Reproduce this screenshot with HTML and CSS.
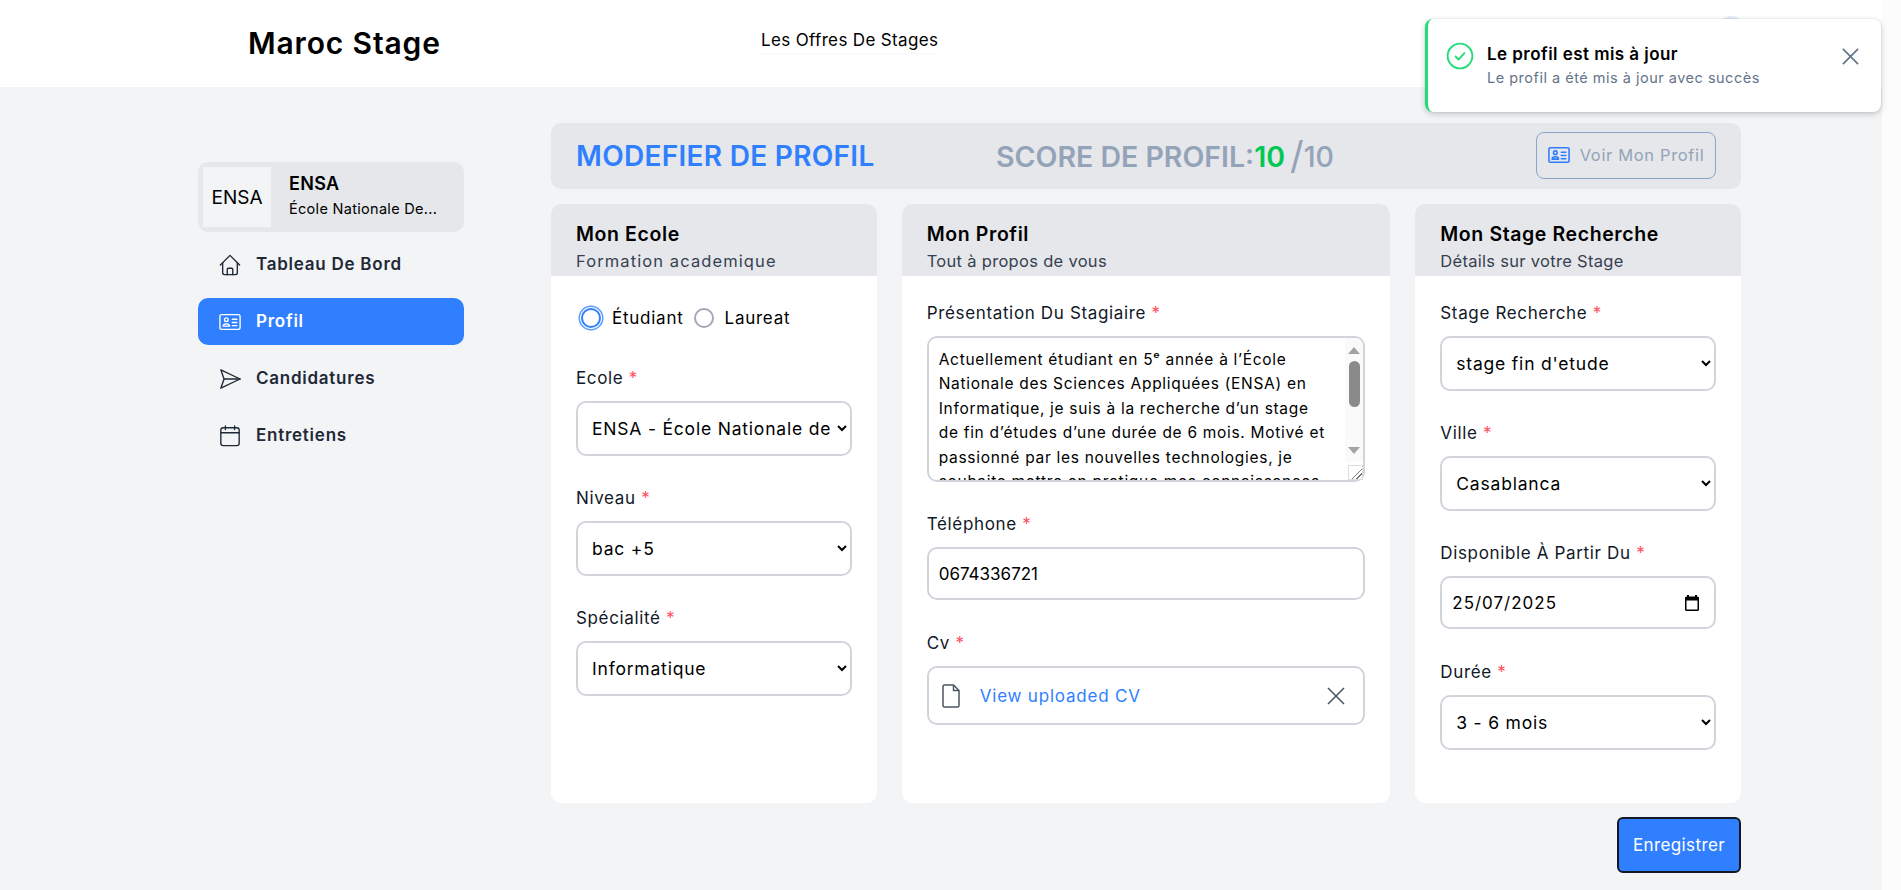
FILE: index.html
```html
<!DOCTYPE html>
<html lang="fr">
<head>
    <meta charset="UTF-8">
    <meta name="viewport" content="width=device-width, initial-scale=1.0">
    <title>Maroc Stage</title>
    <link rel="stylesheet" href="styles.css">
</head>
<body>
    <header class="topbar">
        <div class="brand">Maroc Stage</div>
        <a class="topbar-link" href="#">Les Offres De Stages</a>
        <div class="avatar"></div>
    </header>

    <div class="toast">
        <svg class="toast-check" viewBox="0 0 24 24" fill="none" stroke="#22dd77" stroke-width="1.6" stroke-linecap="round" stroke-linejoin="round"><circle cx="12" cy="12" r="10.6"/><path d="M8.2 12.4l2.6 2.6 5-5.4"/></svg>
        <div class="toast-body">
            <div class="toast-title">Le profil est mis à jour</div>
            <div class="toast-text">Le profil a été mis à jour avec succès</div>
        </div>
        <svg class="toast-close" viewBox="0 0 18 18" fill="none" stroke="#64748b" stroke-width="1.8"><path d="M1 1l16 16M17 1L1 17"/></svg>
    </div>

    <div class="page">
        <aside class="sidebar">
            <div class="school-card">
                <div class="school-logo">ENSA</div>
                <div class="school-info">
                    <div class="school-name">ENSA</div>
                    <div class="school-full">École Nationale De...</div>
                </div>
            </div>
            <a class="nav-item" href="#">
                <svg class="nav-icon" viewBox="0 0 24 24" fill="none" stroke="currentColor" stroke-width="1.5" stroke-linecap="round" stroke-linejoin="round"><path d="M1.5 12L12 1.5 22.500 12"/><path d="M4 9.500V20.500a2 2 0 0 0 2 2h12a2 2 0 0 0 2-2V9.500"/><path d="M9 22.500v-6a1 1 0 0 1 1-1h4a1 1 0 0 1 1 1v6"/></svg>
                Tableau De Bord
            </a>
            <a class="nav-item active" href="#">
                <svg class="nav-icon" viewBox="0 0 24 24" fill="none" stroke="currentColor" stroke-width="1.500" stroke-linecap="round" stroke-linejoin="round"><rect x="1" y="4" width="22" height="16" rx="2"/><circle cx="8" cy="9.500" r="2"/><path d="M4.500 16.500c0-1.500 1.500-2.500 3.500-2.500s3.500 1 3.500 2.500z"/><path d="M14.500 9h5M14.500 12.500h5M14.500 16h5"/></svg>
                Profil
            </a>
            <a class="nav-item" href="#">
                <svg class="nav-icon" viewBox="0 0 24 24" fill="none" stroke="currentColor" stroke-width="1.500" stroke-linecap="round" stroke-linejoin="round"><path d="M2 2l21 10L2 22l3.500-10z"/><path d="M5.500 12H23"/></svg>
                Candidatures
            </a>
            <a class="nav-item" href="#">
                <svg class="nav-icon" viewBox="0 0 24 24" fill="none" stroke="currentColor" stroke-width="1.500" stroke-linecap="round" stroke-linejoin="round"><path d="M7 1v4M17 1v4"/><rect x="2" y="3" width="20" height="19.500" rx="2.500"/><path d="M2 8.500h20"/></svg>
                Entretiens
            </a>
        </aside>

        <main class="content">
            <div class="title-bar">
                <h1 class="title">MODEFIER DE PROFIL</h1>
                <div class="score">SCORE DE PROFIL:<span class="score-value">10</span><span class="score-slash">/</span><span class="score-total">10</span></div>
                <button class="view-btn" type="button">
                    <svg class="view-icon" viewBox="0 0 24 24" fill="none" stroke="#2f7dff" stroke-width="1.700" stroke-linecap="round" stroke-linejoin="round"><rect x="1" y="4" width="22" height="16" rx="1.500"/><circle cx="8" cy="9.500" r="2"/><path d="M4.500 16.500c0-1.500 1.500-2.500 3.500-2.500s3.500 1 3.500 2.500z"/><path d="M14.500 9h5M14.500 12.500h5M14.500 16h5"/></svg>
                    Voir Mon Profil
                </button>
            </div>

            <div class="cards">
                <section class="card">
                    <div class="card-head">
                        <h2>Mon Ecole</h2>
                        <p class="sub-wide">Formation academique</p>
                    </div>
                    <div class="card-body">
                        <div class="radios">
                            <label class="radio"><input type="radio" name="statut" class="radio-input on" checked> Étudiant</label>
                            <label class="radio"><input type="radio" name="statut" class="radio-input"> Laureat</label>
                        </div>
                        <div class="field field-ecole">
                            <label>Ecole <span class="req">*</span></label>
                            <select class="control"><option>ENSA - École Nationale des Sciences Appliquées</option></select>
                        </div>
                        <div class="field">
                            <label>Niveau <span class="req">*</span></label>
                            <select class="control"><option>bac +5</option></select>
                        </div>
                        <div class="field">
                            <label>Spécialité <span class="req">*</span></label>
                            <select class="control"><option>Informatique</option></select>
                        </div>
                    </div>
                </section>

                <section class="card">
                    <div class="card-head">
                        <h2>Mon Profil</h2>
                        <p>Tout à propos de vous</p>
                    </div>
                    <div class="card-body card-body-top">
                        <div class="field">
                            <label>Présentation Du Stagiaire <span class="req">*</span></label>
                            <div class="area-wrap">
                                <textarea class="control area" wrap="off">Actuellement étudiant en 5ᵉ année à l’École
Nationale des Sciences Appliquées (ENSA) en
Informatique, je suis à la recherche d’un stage
de fin d’études d’une durée de 6 mois. Motivé et
passionné par les nouvelles technologies, je
souhaite mettre en pratique mes connaissances
en développement web et en gestion de projets
au sein d’une équipe dynamique, rigoureux,
curieux et autonome.</textarea>
                                <div class="area-bar">
                                    <span class="bar-up"></span>
                                    <span class="bar-thumb"></span>
                                    <span class="bar-down"></span>
                                </div>
                            </div>
                        </div>
                        <div class="field field-tel">
                            <label>Téléphone <span class="req">*</span></label>
                            <input class="control input" type="text" value="0674336721">
                        </div>
                        <div class="field">
                            <label>Cv <span class="req">*</span></label>
                            <div class="control cv-box">
                                <svg class="cv-doc" viewBox="0 0 18 24" fill="none" stroke="#4b5563" stroke-width="1.500" stroke-linejoin="round"><path d="M2.500 1h9l5.500 5.500V21.500a1.500 1.500 0 0 1-1.500 1.500h-13A1.500 1.500 0 0 1 1 21.500V2.500A1.500 1.500 0 0 1 2.500 1z"/><path d="M11.500 1v5.500H17"/></svg>
                                <a class="cv-link" href="#">View uploaded CV</a>
                                <svg class="cv-close" viewBox="0 0 18 18" fill="none" stroke="#4b5563" stroke-width="1.600"><path d="M1 1l16 16M17 1L1 17"/></svg>
                            </div>
                        </div>
                    </div>
                </section>

                <section class="card">
                    <div class="card-head">
                        <h2>Mon Stage Recherche</h2>
                        <p>Détails sur votre Stage</p>
                    </div>
                    <div class="card-body card-body-top">
                        <div class="field">
                            <label>Stage Recherche <span class="req">*</span></label>
                            <select class="control"><option>stage fin d'etude</option></select>
                        </div>
                        <div class="field">
                            <label>Ville <span class="req">*</span></label>
                            <select class="control"><option>Casablanca</option></select>
                        </div>
                        <div class="field field-date">
                            <label>Disponible À Partir Du <span class="req">*</span></label>
                            <div class="control date-box">
                                <input class="date-input" type="text" value="25/07/2025">
                                <svg class="date-icon" viewBox="0 0 14 16"><path fill="#000" d="M2 0h2v1.500h6V0h2v1.500h.500A1.500 1.500 0 0 1 14 3v11.500a1.500 1.500 0 0 1-1.500 1.500h-11A1.500 1.500 0 0 1 0 14.500V3a1.500 1.500 0 0 1 1.500-1.500H2zM1.500 5.500v9h11v-9z"/></svg>
                            </div>
                        </div>
                        <div class="field">
                            <label>Durée <span class="req">*</span></label>
                            <select class="control"><option>3 - 6 mois</option></select>
                        </div>
                    </div>
                </section>
            </div>

            <div class="actions">
                <button class="save-btn" type="button">Enregistrer</button>
            </div>
        </main>
    </div>
</body>
</html>
```

FILE: styles.css
```css
* {
    box-sizing: border-box;
}
html {
    height: 100%;
    background-color: #fcfcfc;
    overflow: hidden;
}
body {
    margin: 0;
    width: 1882px;
    height: 100%;
    background-color: #f3f4f6;
    font-family: Inter, "Noto Sans", sans-serif;
    color: #000;
}
a {
    text-decoration: none;
    color: inherit;
}

.topbar {
    height: 87px;
    background-color: #fff;
    display: flex;
    align-items: center;
    padding-left: 248px;
    position: relative;
}
.brand {
    font-size: 30px;
    font-weight: 600;
    letter-spacing: 0.85px;
    width: 513px;
    margin-top: -2px;
}
.topbar-link {
    font-size: 17px;
    letter-spacing: 0.35px;
    margin-top: -3px;
    padding-bottom: 3px;
    border-bottom: 1px solid #f7f7f8;
}
.avatar {
    position: absolute;
    left: 1717px;
    top: 16px;
    width: 28px;
    height: 28px;
    border-radius: 50%;
    background-color: #e5edf9;
}

.toast {
    position: absolute;
    left: 1425px;
    top: 19px;
    width: 456px;
    height: 93px;
    background-color: #fff;
    border-left: 3px solid #22dd77;
    border-radius: 8px;
    box-shadow: 0 2px 6px rgba(0, 0, 0, 0.2), 0 0 0 1px rgba(0, 0, 0, 0.03);
    display: flex;
    padding: 23px 22px 0 18px;
    z-index: 5;
}
.toast-check {
    width: 28px;
    height: 28px;
    margin-right: 13px;
    flex: none;
}
.toast-body {
    flex: 1;
}
.toast-title {
    font-size: 17px;
    font-weight: 600;
    letter-spacing: 0.45px;
    line-height: 24px;
}
.toast-text {
    font-size: 14.5px;
    letter-spacing: 0.5px;
    line-height: 24px;
    color: #64748b;
}
.toast-close {
    width: 17px;
    height: 17px;
    margin-top: 6px;
}

.page {
    display: flex;
    padding: 36px 0 0 198px;
}
.sidebar {
    width: 266px;
    margin-top: 39px;
    display: flex;
    flex-direction: column;
    gap: 10px;
}
.school-card {
    height: 70px;
    background-color: #e5e7eb;
    border-radius: 10px;
    display: flex;
    align-items: center;
    padding-left: 5px;
    margin-bottom: -1px;
}
.school-logo {
    width: 68px;
    height: 60px;
    background-color: #f3f4f6;
    display: flex;
    align-items: center;
    justify-content: center;
    font-size: 19px;
}
.school-info {
    margin: -3px 0 0 18px;
}
.school-name {
    font-size: 18px;
    font-weight: 600;
    letter-spacing: 0.3px;
    line-height: 25px;
}
.school-full {
    font-size: 14.5px;
    letter-spacing: 0.3px;
    line-height: 25px;
}
.nav-item {
    height: 47px;
    display: flex;
    align-items: center;
    padding: 0 0 2px 21px;
    border-radius: 10px;
    font-size: 17px;
    font-weight: 600;
    letter-spacing: 0.75px;
    color: #1f2937;
}
.nav-item.active {
    background-color: #2f7fff;
    color: #fff;
}
.nav-icon {
    width: 22px;
    height: 22px;
    margin: 2px 15px 0 0;
    flex: none;
}

.content {
    width: 1190px;
    margin-left: 87px;
}
.title-bar {
    height: 66px;
    background-color: #e5e7eb;
    border-radius: 10px;
    display: flex;
    align-items: center;
    padding: 0 25px;
    position: relative;
}
.title {
    margin: 0;
    font-size: 28px;
    font-weight: 600;
    letter-spacing: 0.3px;
    color: #2f7fff;
    width: 420px;
}
.score {
    font-size: 28.500px;
    font-weight: 600;
    color: #94a3b8;
    display: flex;
    align-items: center;
    white-space: pre;
}
.score-value {
    color: #00c853;
}
.score-slash {
    font-size: 38px;
    font-weight: 400;
    line-height: 1;
    margin: -2px 0 0 5px;
}
.score-total {
    font-weight: 500;
}
.view-btn {
    margin: -2px 0 0 auto;
    width: 180px;
    height: 47px;
    background: transparent;
    border: 1px solid #8ea3c8;
    border-radius: 8px;
    display: flex;
    align-items: center;
    justify-content: center;
    gap: 10px;
    font-family: inherit;
    font-size: 16.500px;
    letter-spacing: 0.65px;
    color: #94a3b8;
}
.view-icon {
    width: 22px;
    height: 22px;
    flex: none;
}

.cards {
    display: grid;
    grid-template-columns: 2fr 3fr 2fr;
    gap: 25px;
    margin-top: 15px;
}
.card {
    height: 599px;
    background-color: #fff;
    border-radius: 10px;
    overflow: hidden;
}
.card-head {
    height: 72px;
    background-color: #e5e7eb;
    padding: 18px 25px 0;
}
.card-head h2 {
    margin: 0;
    font-size: 19.500px;
    font-weight: 600;
    letter-spacing: 0.6px;
    line-height: 24px;
}
.card-head p {
    margin: 3px 0 0;
    font-size: 16.500px;
    letter-spacing: 0.3px;
    line-height: 24px;
    color: #374151;
}
.card-head .sub-wide {
    letter-spacing: 1.1px;
}
.card-body {
    padding: 0 25px;
}
.card-body-top {
    padding-top: 25px;
}
.radios {
    display: flex;
    align-items: center;
    gap: 10px;
    height: 84px;
    padding-left: 5px;
}
.radio {
    display: flex;
    align-items: center;
    font-size: 17px;
    letter-spacing: 0.75px;
}
.radio-input {
    appearance: none;
    width: 20px;
    height: 20px;
    margin: 0 11px 0 0;
    border: 2px solid #a3a8b4;
    border-radius: 50%;
    background-color: #fff;
}
.radio-input.on {
    border: 2.500px solid #2f7fff;
    box-shadow: 0 0 0 1px #fff, 0 0 0 2.500px #5a9bff;
}
.field {
    margin-bottom: 30px;
}
.field-ecole {
    margin-top: 6px;
}
.field label {
    display: block;
    font-size: 17px;
    letter-spacing: 0.65px;
    line-height: 24px;
    margin-bottom: 11px;
    color: #111827;
}
.req {
    color: #ff4d5e;
}
.control {
    width: 100%;
    height: 55px;
    background-color: #fff;
    border: 2px solid #d1d5db;
    border-radius: 10px;
    font-family: inherit;
    font-size: 17px;
    color: #000;
}
select.control {
    padding: 0 4px 0 10px;
    font-size: 17.500px;
    letter-spacing: 0.8px;
}
.input {
    height: 53px;
    padding: 0 10px;
}
.field-tel {
    margin-bottom: 31px;
}
.area-wrap {
    position: relative;
}
.area {
    display: block;
    height: 146px;
    padding: 10px 10px;
    font-size: 15.500px;
    letter-spacing: 0.7px;
    line-height: 24.400px;
    overflow: hidden;
    resize: both;
}
.area::-webkit-resizer {
    background-color: #fff;
    border: 1px solid #dcdcdc;
    background-image: linear-gradient(135deg, transparent 58%, #777 58%, #777 64%, transparent 64%, transparent 76%, #777 76%, #777 82%, transparent 82%);
}
/* headless chrome hides real scrollbars, so this one is drawn over the textarea */
.area-bar {
    position: absolute;
    top: 2px;
    right: 2px;
    width: 18px;
    height: 124px;
    background-color: #fafafa;
    border-top-right-radius: 8px;
    display: flex;
    flex-direction: column;
    align-items: center;
}
.bar-up {
    margin-top: 9px;
    border-left: 6px solid transparent;
    border-right: 6px solid transparent;
    border-bottom: 7px solid #a3a3a3;
}
.bar-thumb {
    margin-top: 7px;
    width: 11px;
    height: 46px;
    border-radius: 6px;
    background-color: #8a8a8a;
}
.bar-down {
    margin: auto 0 8px;
    border-left: 6px solid transparent;
    border-right: 6px solid transparent;
    border-top: 7px solid #a3a3a3;
}
.cv-box {
    height: 59px;
    display: flex;
    align-items: center;
    padding: 0 13px;
}
.cv-doc {
    width: 18px;
    height: 24px;
    flex: none;
    margin-right: 20px;
}
.cv-link {
    color: #2f7fff;
    font-size: 17px;
    letter-spacing: 0.8px;
    flex: 1;
}
.cv-close {
    width: 18px;
    height: 18px;
    margin-right: 5px;
}
.field-date {
    margin-bottom: 31px;
}
.date-box {
    height: 53px;
    display: flex;
    align-items: center;
    padding: 0 15px 0 10px;
}
.date-input {
    flex: 1;
    min-width: 0;
    border: none;
    outline: none;
    padding: 0;
    font-family: inherit;
    font-size: 17px;
    letter-spacing: 1px;
    background: transparent;
}
.date-icon {
    width: 14px;
    height: 16px;
    flex: none;
}

.actions {
    display: flex;
    justify-content: flex-end;
    margin-top: 14px;
}
.save-btn {
    width: 124px;
    height: 56px;
    background-color: #2f7fff;
    color: #fff;
    border: 2px solid #111827;
    border-radius: 6px;
    font-family: inherit;
    font-size: 17px;
    letter-spacing: 0.4px;
}
```
